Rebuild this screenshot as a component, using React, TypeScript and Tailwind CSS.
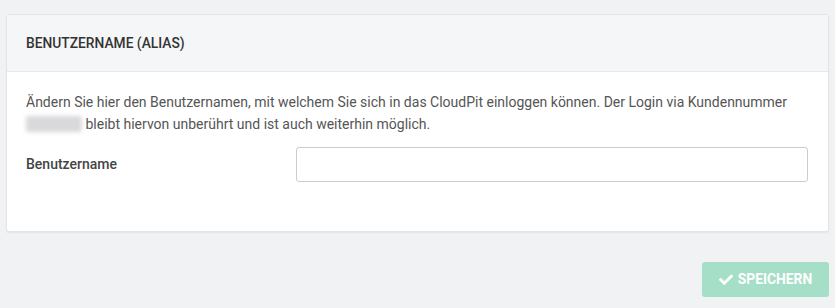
import React from "react";

const CheckIcon: React.FC = () => (
  <svg width="14" height="11" viewBox="0 0 512 400" fill="currentColor" aria-hidden>
    <path d="M173.9 389.5L7.5 223.1c-10-10-10-26.2 0-36.2l36.2-36.2c10-10 26.2-10 36.2 0L192 262.8 432.1 22.7c10-10 26.2-10 36.2 0l36.2 36.2c10 10 10 26.2 0 36.2L210.1 389.5c-10 10-26.2 10-36.2 0z" />
  </svg>
);

export default function App() {
  return (
    <div
      className="min-h-[308px] w-[835px] bg-[#f1f2f4] px-[6px] pt-[14px] text-[14px] text-[#555]"
      style={{ fontFamily: "Roboto, 'Liberation Sans', sans-serif" }}
    >
      <section className="rounded-[3px] border border-[#e3e5e8] bg-white shadow-[0_1px_2px_rgba(0,0,0,0.06)]">
        <header className="flex h-[57px] items-center border-b border-[#e6e8ea] bg-[#f5f6f7] px-[19px]">
          <h2 className="text-[13.8px] font-medium uppercase text-[#333]">Benutzername (Alias)</h2>
        </header>
        <div className="pl-[19px] pr-[10px] pt-[19px] pb-[49px]">
          <p className="leading-[22px]">
            Ändern Sie hier den Benutzernamen, mit welchem Sie sich in das CloudPit einloggen können. Der Login via
            Kundennummer{" "}
            <span className="inline-block h-[16px] w-[56px] translate-y-[3px] rounded-[3px] bg-[#d9d9db] blur-[2px]" />{" "}
            bleibt hiervon unberührt und ist auch weiterhin möglich.
          </p>
          <div className="mt-[12px] flex items-center pr-[10px]">
            <label className="w-[270px] text-[14px] font-medium text-[#444]">Benutzername</label>
            <input
              type="text"
              className="h-[35px] flex-1 rounded-[3px] border border-[#ccc] bg-white px-3 outline-none"
            />
          </div>
        </div>
      </section>
      <div className="mt-[30px] flex justify-end">
        <button
          type="button"
          className="flex h-[35px] w-[127px] items-center justify-center gap-[5px] rounded-[3px] bg-[#a6dfc8] text-[13.8px] font-bold uppercase text-white"
        >
          <CheckIcon />
          Speichern
        </button>
      </div>
    </div>
  );
}
